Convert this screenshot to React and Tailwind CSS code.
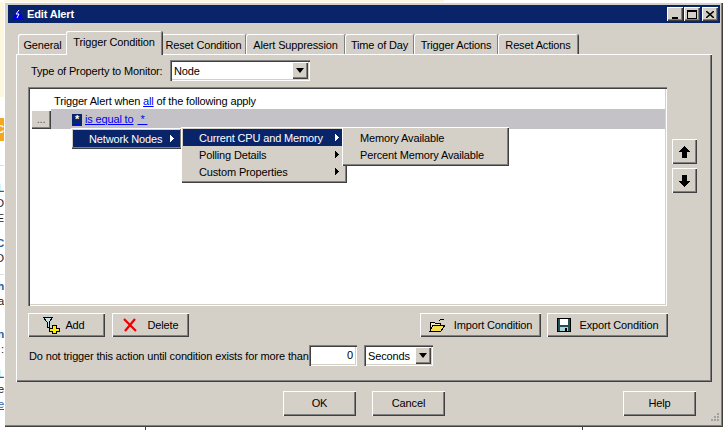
import React from "react";

const raised = "bg-[#d4d0c8] shadow-[inset_1px_1px_0_#ffffff,inset_-1px_-1px_0_#404040,inset_-2px_-2px_0_#808080]";
const sunken = "bg-white shadow-[inset_1px_1px_0_#808080,inset_2px_2px_0_#404040,inset_-1px_-1px_0_#ffffff,inset_-2px_-2px_0_#d4d0c8]";
const font = "font-['Liberation_Sans',Arial,sans-serif]";

const fragments = [
  { h: 95, cls: "bg-[#fdf7de]" },
  { h: 21, cls: "bg-white" },
  { h: 23, cls: "bg-[#f5a623] text-white font-bold", t: "C" },
  { h: 24, cls: "bg-white" },
  { h: 1, cls: "bg-[#dddddd]" },
  { h: 15, cls: "bg-white" },
  { h: 15, cls: "bg-white text-[#2a5f9e] font-bold", t: "L" },
  { h: 15, cls: "bg-white text-[#222222]", t: "O" },
  { h: 15, cls: "bg-white text-[#222222]", t: "E" },
  { h: 10, cls: "bg-white" },
  { h: 15, cls: "bg-white text-[#2a5f9e] font-bold", t: "C" },
  { h: 15, cls: "bg-white text-[#222222]", t: "O" },
  { h: 8, cls: "bg-white" },
  { h: 1, cls: "bg-[#dddddd]" },
  { h: 4, cls: "bg-white" },
  { h: 15, cls: "bg-white text-[#2a5f9e] font-bold", t: "h" },
  { h: 15, cls: "bg-white text-[#222222]", t: "a" },
  { h: 18, cls: "bg-white" },
  { h: 15, cls: "bg-white text-[#2a5f9e] font-bold", t: "n" },
  { h: 15, cls: "bg-white text-[#222222]", t: ":" },
  { h: 10, cls: "bg-white" },
  { h: 15, cls: "bg-white text-[#2a5f9e] font-bold", t: "L" },
  { h: 15, cls: "bg-white text-[#222222]", t: "e" },
  { h: 15, cls: "bg-white text-[#2a5f9e] underline", t: "e" },
  { h: 30, cls: "bg-white" },
];

const tabs = [
  { label: "General", w: 49 },
  { label: "Trigger Condition", w: 96, active: true },
  { label: "Reset Condition", w: 85 },
  { label: "Alert Suppression", w: 99 },
  { label: "Time of Day", w: 69 },
  { label: "Trigger Actions", w: 84 },
  { label: "Reset Actions", w: 80 },
];

function Tab({ label, w, active }) {
  if (active) {
    return (
      <div
        style={{ width: w }}
        className="relative z-10 h-[24px] -mb-[1px] -mx-[1px] pb-[2px] flex items-center justify-center bg-[#d4d0c8] rounded-t-[2px] shadow-[inset_1px_1px_0_#ffffff,inset_-1px_0_0_#808080,1px_0_0_#404040]"
      >
        {label}
      </div>
    );
  }
  return (
    <div
      style={{ width: w }}
      className="h-[20px] pt-[2px] flex items-center justify-center rounded-t-[2px] shadow-[inset_1px_1px_0_#ffffff,inset_-1px_0_0_#808080,1px_0_0_#404040]"
    >
      {label}
    </div>
  );
}

function WinIcon({ children }) {
  return <div className={`w-[16px] h-[14px] flex items-center justify-center ${raised}`}>{children}</div>;
}

function Arrow() {
  return (
    <svg width="4" height="7" viewBox="0 0 4 7" shapeRendering="crispEdges">
      <polygon points="0,0 4,3.5 0,7" fill="currentColor" />
    </svg>
  );
}

function DropDown({ className, children }) {
  return (
    <div className={`h-[21px] flex items-center ${sunken} ${className}`}>
      <div className="flex-1 pl-[4px] pt-[1px]">{children}</div>
      <div className={`w-[16px] h-[17px] mr-[2px] flex items-center justify-center ${raised}`}>
        <svg width="8" height="5" viewBox="0 0 8 5">
          <polygon points="0,0 8,0 4,5" fill="#000000" />
        </svg>
      </div>
    </div>
  );
}

function Btn({ className, children }) {
  return <div className={`flex items-center justify-center ${raised} ${className}`}>{children}</div>;
}

function MenuItem({ label, active, arrow }) {
  return (
    <div className={`h-[17px] flex items-center justify-between pl-[16px] pr-[6px] ${active ? "bg-[#0a246a] text-white" : "text-black"}`}>
      <span className="pt-[1px]">{label}</span>
      {arrow && <Arrow />}
    </div>
  );
}

function FilterAddIcon() {
  return (
    <svg width="18" height="18" viewBox="0 0 18 18" shapeRendering="crispEdges">
      <polygon points="1,1 11,1 7,6 7,11 5,11 5,6" fill="#bfe6ee" stroke="#000000" />
      <path d="M10 9h4v3h3v3h-3v2h-4v-2H7v-3h3z" fill="#ffee00" stroke="#000000" />
    </svg>
  );
}

function DeleteIcon() {
  return (
    <svg width="14" height="14" viewBox="0 0 14 14">
      <path d="M1 1 L13 13 M12 1 L2 13" stroke="#ee0000" strokeWidth="2.2" />
    </svg>
  );
}

function FolderIcon() {
  return (
    <svg width="17" height="14" viewBox="0 0 17 14" shapeRendering="crispEdges">
      <path d="M10 3c1-2 3-2 5-2" fill="none" stroke="#000000" />
      <path d="M1 13V4h4l1 1h5v3" fill="#f8f0a0" stroke="#000000" />
      <polygon points="1,13 4,7 16,7 12,13" fill="#f5e050" stroke="#000000" />
    </svg>
  );
}

function SaveIcon() {
  return (
    <svg width="14" height="14" viewBox="0 0 14 14" shapeRendering="crispEdges">
      <rect x="0.5" y="0.5" width="13" height="13" fill="#1f4f57" stroke="#000000" />
      <rect x="3" y="1" width="8" height="6" fill="#ffffff" />
      <rect x="3" y="9" width="8" height="4" fill="#a5d5dc" />
      <rect x="8" y="10" width="2" height="3" fill="#000000" />
    </svg>
  );
}

function VArrow({ down }) {
  return (
    <svg width="11" height="12" viewBox="0 0 11 12" shapeRendering="crispEdges">
      <polygon points={down ? "3,0 8,0 8,6 11,6 5.5,12 0,6 3,6" : "5.5,0 11,6 8,6 8,12 3,12 3,6 0,6"} fill="#000000" />
    </svg>
  );
}

export default function App() {
  return (
    <div className={`w-[727px] h-[430px] flex overflow-hidden bg-white text-[11px] leading-none tracking-[-0.15px] text-black ${font}`}>
      {/* bits of the page behind the dialog */}
      <div className="w-[4px] pt-[2px] shrink-0 overflow-hidden">
        {fragments.map((f, i) => (
          <div key={i} style={{ height: f.h }} className={`flex items-center justify-end whitespace-nowrap ${f.cls}`}>
            {f.t}
          </div>
        ))}
      </div>

      <div className="w-[719px] shrink-0 flex flex-col">
        <div className="h-[2px] flex">
          <div className="w-[440px] bg-[#fdf7de]" />
        </div>

        <div className={`relative h-[425px] pt-[3px] pl-[4px] pr-[3px] ${raised}`}>
          <div className="h-[18px] bg-[#0a246a] flex items-center pl-[4px] pr-[2px]">
            <svg width="12" height="12" viewBox="0 0 12 12">
              <polygon points="6,0 12,12 0,12" fill="#0000e0" />
              <path d="M7 2 L4 6 H7 L5 10" fill="none" stroke="#ffffff" />
            </svg>
            <span className="ml-[3px] font-bold text-white">Edit Alert</span>
            <div className="ml-auto flex">
              <WinIcon>
                <div className="w-[6px] h-[2px] bg-black mt-[7px] -ml-[1px]" />
              </WinIcon>
              <div className="w-[1px]" />
              <WinIcon>
                <div className="w-[10px] h-[9px] border border-black border-t-2" />
              </WinIcon>
              <div className="w-[2px]" />
              <WinIcon>
                <svg width="8" height="7" viewBox="0 0 8 7">
                  <path d="M0 0 L8 7 M8 0 L0 7" stroke="#000000" strokeWidth="1.5" />
                </svg>
              </WinIcon>
            </div>
          </div>

          <div className="mx-[8px] mt-[9px]">
            <div className="h-[22px] pl-[2px] flex items-end">
              {tabs.map((t) => (
                <Tab key={t.label} {...t} />
              ))}
            </div>

            <div className="h-[328px] w-[696px] pt-[6px] pl-[13px] shadow-[inset_1px_1px_0_#ffffff,inset_-1px_-1px_0_#404040,inset_-2px_-2px_0_#808080]">
              <div className="h-[21px] pl-[2px] flex items-center">
                <span className="w-[139px] pt-[2px]">Type of Property to Monitor:</span>
                <DropDown className="w-[140px]">Node</DropDown>
              </div>

              <div className="mt-[6px] -ml-[1px] flex">
                <div className={`relative w-[639px] h-[219px] pl-[3px] pr-[2px] py-[2px] ${sunken}`}>
                  <div className="h-[20px] pl-[23px] pt-[4px] flex items-center">
                    Trigger Alert when&nbsp;<span className="text-[#0000ff] underline">all</span>&nbsp;of the following apply
                  </div>
                  <div className="flex h-[20px]">
                    <Btn className="w-[20px] h-[19px] mt-[1px] text-[#555555]">...</Btn>
                    <div className="flex-1 bg-[#c4c2c6] flex items-center pl-[21px] pt-[1px] text-[#0000ff] underline">
                      <span className="w-[10px] h-[12px] mr-[3px] bg-[#0a246a] text-white font-bold flex items-center justify-center">*</span>
                      is equal to
                      <span className="ml-[4px]">&nbsp;*&nbsp;</span>
                    </div>
                  </div>

                  <div className={`absolute left-[43px] top-[41px] w-[111px] h-[21px] p-[2px] ${raised}`}>
                    <MenuItem label="Network Nodes" active arrow />
                  </div>
                  <div className={`absolute left-[153px] top-[40px] w-[166px] h-[56px] p-[2px] ${raised}`}>
                    <MenuItem label="Current CPU and Memory" active arrow />
                    <MenuItem label="Polling Details" arrow />
                    <MenuItem label="Custom Properties" arrow />
                  </div>
                  <div className={`absolute left-[314px] top-[40px] w-[167px] h-[39px] p-[2px] ${raised}`}>
                    <MenuItem label="Memory Available" />
                    <MenuItem label="Percent Memory Available" />
                  </div>
                </div>

                <div className="ml-[5px] pt-[52px] flex flex-col gap-[4px]">
                  <Btn className="w-[25px] h-[25px]"><VArrow /></Btn>
                  <Btn className="w-[25px] h-[25px]"><VArrow down /></Btn>
                </div>
              </div>

              <div className="mt-[7px] -ml-[1px] w-[640px] h-[24px] flex">
                <Btn className="w-[77px] h-[24px] gap-[5px] pr-[6px]"><FilterAddIcon />Add</Btn>
                <Btn className="w-[77px] h-[24px] ml-[7px] gap-[11px]"><DeleteIcon />Delete</Btn>
                <Btn className="w-[121px] h-[24px] ml-auto gap-[8px]"><FolderIcon />Import Condition</Btn>
                <Btn className="w-[121px] h-[24px] ml-[6px] gap-[9px]"><SaveIcon />Export Condition</Btn>
              </div>

              <div className="mt-[8px] h-[21px] flex items-center">
                <span className="w-[280px] whitespace-nowrap pt-[1px]">Do not trigger this action until condition exists for more than</span>
                <div className={`w-[48px] h-[21px] pr-[4px] flex items-center justify-end ${sunken}`}>0</div>
                <DropDown className="w-[69px] ml-[7px]">Seconds</DropDown>
              </div>
            </div>

            <div className="mt-[9px] h-[25px] flex pl-[267px]">
              <Btn className="w-[73px]">OK</Btn>
              <Btn className="w-[73px] ml-[16px]">Cancel</Btn>
              <Btn className="w-[73px] ml-[178px]">Help</Btn>
            </div>
          </div>

          {/* resize grip */}
          <svg className="absolute right-[3px] bottom-[3px]" width="12" height="12" viewBox="0 0 12 12" shapeRendering="crispEdges">
            <path d="M9 1h2v2H9zM6 4h2v2H6zM9 4h2v2H9zM3 7h2v2H3zM6 7h2v2H6zM9 7h2v2H9z" fill="#a0a0a0" />
          </svg>
        </div>

        <div className="h-[3px] flex">
          <div className="ml-[141px] w-[1px] bg-[#404040]" />
          <div className="ml-[436px] w-[1px] bg-[#404040]" />
        </div>
      </div>

      <div className="w-[4px] shrink-0 bg-white" />
    </div>
  );
}
